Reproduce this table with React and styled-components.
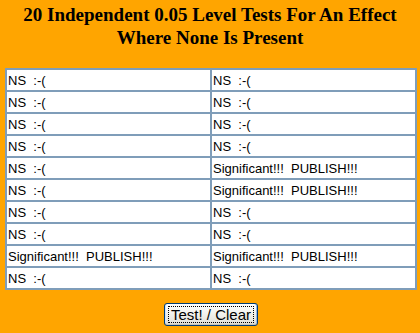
import React from "react";
import styled, { createGlobalStyle } from "styled-components";

const results = [
  [false, false],
  [false, false],
  [false, false],
  [false, false],
  [false, true],
  [false, true],
  [false, false],
  [false, false],
  [true, true],
  [false, false],
];

const GlobalStyle = createGlobalStyle`
  html, body {
    margin: 0;
    padding: 0;
    background: #ffa500;
  }
`;

const Page = styled.div`
  width: 420px;
  height: 333px;
  background: #ffa500;
  padding-top: 3px;
  box-sizing: border-box;
`;

const Title = styled.h3`
  margin: 0;
  text-align: center;
  font-family: "Liberation Serif", "Times New Roman", serif;
  font-size: 19px;
  font-weight: 700;
  line-height: 23px;
  color: #000;
`;

const Table = styled.table`
  margin: 19px 0 0 5px;
  width: 412px;
  border-collapse: separate;
  border-spacing: 0;
  border: 1px solid #7f9db9;
  background: #fff;
`;

const Cell = styled.td`
  width: 50%;
  height: 22px;
  padding: 0 0 0 1px;
  border: 1px solid #7f9db9;
  font-family: "Liberation Sans", Arial, sans-serif;
  font-size: 13px;
  line-height: 19px;
  color: #000;
  white-space: pre;
  box-sizing: border-box;
`;

const Footer = styled.div`
  display: flex;
  justify-content: center;
  margin-top: 13px;
  padding-left: 2px;
`;

const Button = styled.button`
  width: 94px;
  height: 23px;
  padding: 0;
  border: 1px solid #003c74;
  border-radius: 3px;
  background: linear-gradient(#ffffff 0%, #f4f4f0 40%, #e3e2da 90%, #d6d0c5 100%);
  box-shadow: inset 0 -1px 0 #c9c5b8, inset 1px 0 0 #cde4fd, inset -1px 0 0 #97b8e8;
  font-family: "Liberation Sans", Arial, sans-serif;
  font-size: 15px;
  color: #000;
`;

const Focus = styled.span`
  display: block;
  margin: 2px 3px;
  height: 15px;
  border: 1px dotted #000;
  line-height: 15px;
`;

export default function App() {
  return (
    <Page>
      <GlobalStyle />
      <Title>
        20 Independent 0.05 Level Tests For An Effect
        <br />
        Where None Is Present
      </Title>
      <Table>
        <tbody>
          {results.map((row, i) => (
            <tr key={i}>
              {row.map((sig, j) => (
                <Cell key={j}>{sig ? "Significant!!!  PUBLISH!!!" : "NS  :-("}</Cell>
              ))}
            </tr>
          ))}
        </tbody>
      </Table>
      <Footer>
        <Button>
          <Focus>Test! / Clear</Focus>
        </Button>
      </Footer>
    </Page>
  );
}
